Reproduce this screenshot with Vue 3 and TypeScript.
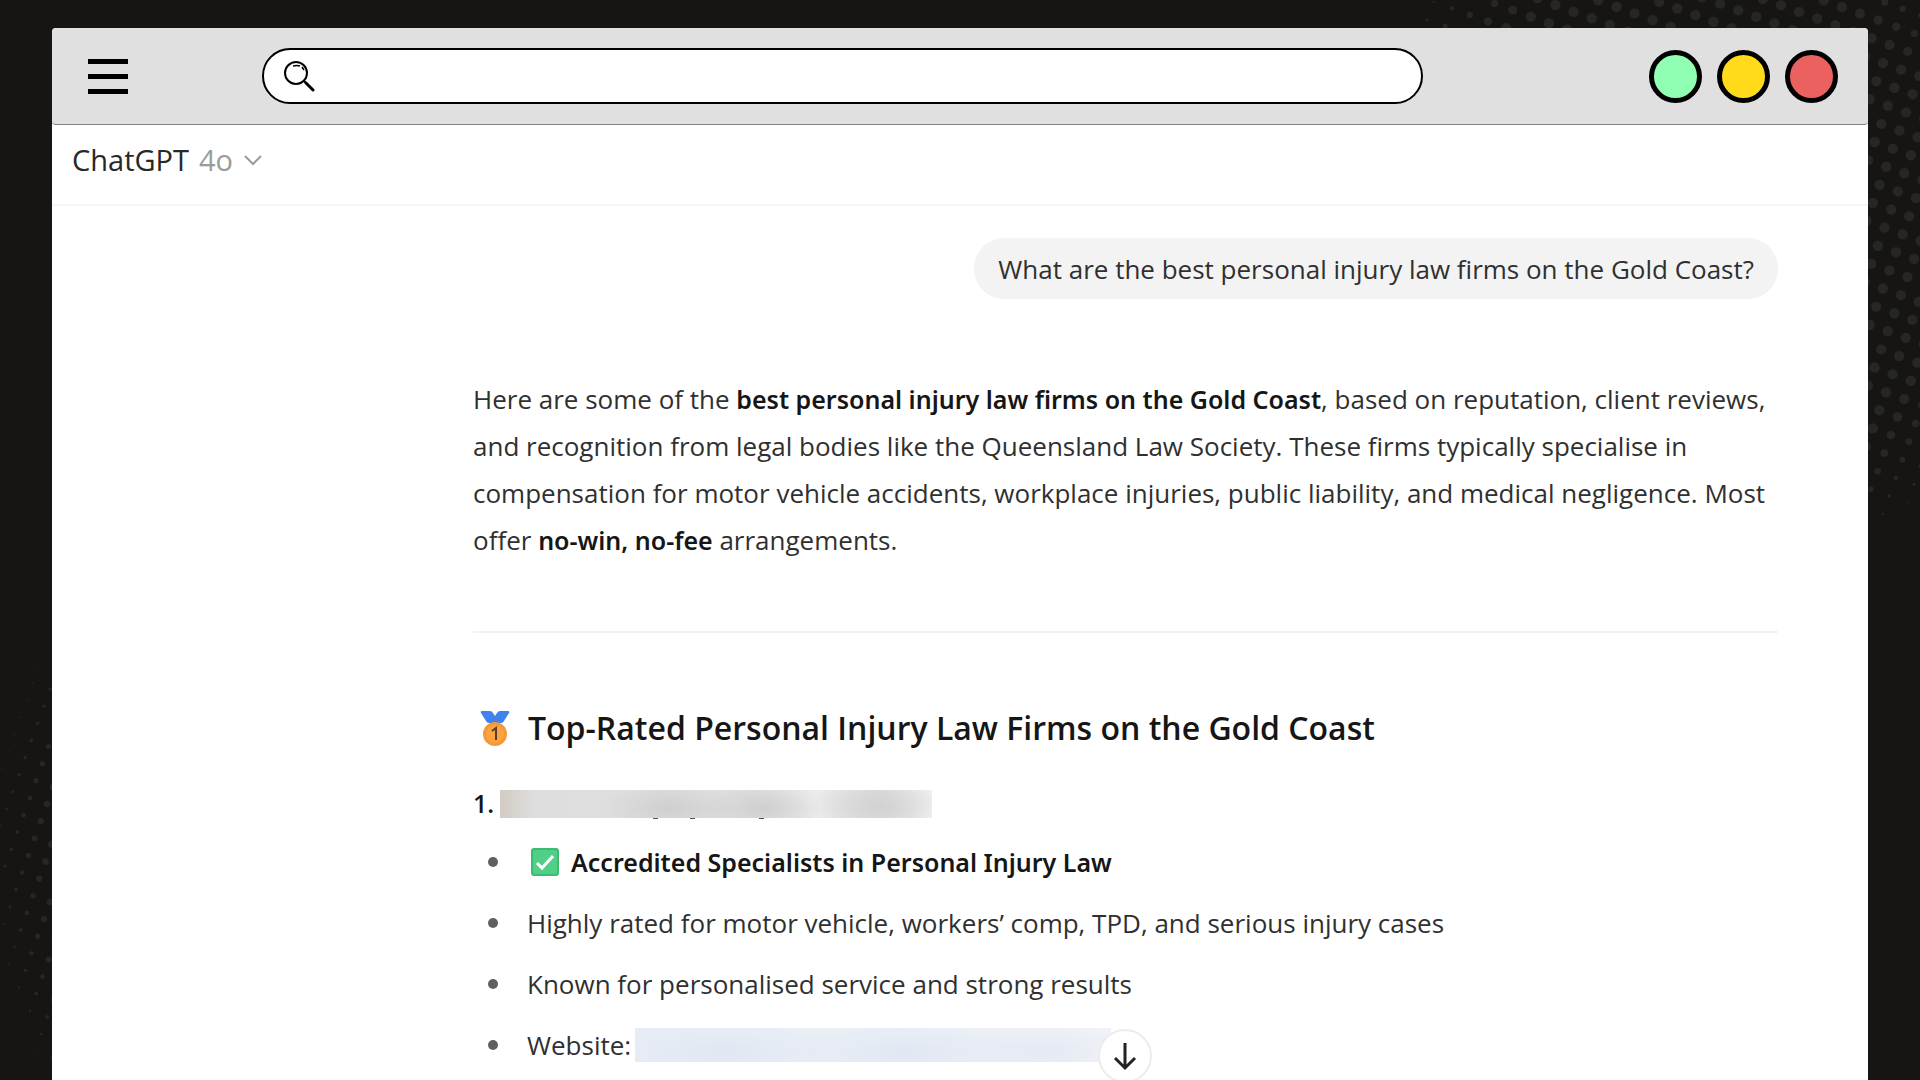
<script setup lang="ts">
interface Dot { x: number; y: number; r: number }
interface Halftone {
  ox: number; oy: number
  ax: number; ay: number
  cx: number; cy: number
  radius: number; max: number; slope: number
  w: number; h: number
}

// Rotated square lattice whose dots shrink towards the rim of a large disc
function halftone(o: Halftone): Dot[] {
  const dots: Dot[] = []
  for (let i = -70; i <= 70; i++) {
    for (let j = -70; j <= 70; j++) {
      const x = o.ox + i * o.ax - j * o.ay
      const y = o.oy + i * o.ay + j * o.ax
      if (x < -6 || y < -6 || x > o.w + 6 || y > o.h + 6) continue
      const r = Math.min(o.max, (o.radius - Math.hypot(x - o.cx, y - o.cy)) / o.slope)
      if (r > 0.5) dots.push({ x, y, r })
    }
  }
  return dots
}

const cornerDots = halftone({ ox: 463, oy: 63, ax: 18.1, ay: 6.6, cx: 270, cy: 230, radius: 365, max: 5.2, slope: 18, w: 500, h: 600 })
const sideDots = halftone({ ox: 26.7, oy: 100, ax: 17.1, ay: 6.2, cx: 400, cy: 262, radius: 424, max: 4, slope: 20, w: 60, h: 480 })

const lights = [
  { name: 'Minimise', color: '#90ffb3' },
  { name: 'Maximise', color: '#ffdb1b' },
  { name: 'Close', color: '#ea6160' },
]
</script>

<template>
  <div class="desktop">
    <svg class="dots corner" width="500" height="600" aria-hidden="true">
      <circle v-for="(d, i) in cornerDots" :key="i" :cx="d.x" :cy="d.y" :r="d.r" />
    </svg>
    <svg class="dots side" width="60" height="480" aria-hidden="true">
      <circle v-for="(d, i) in sideDots" :key="i" :cx="d.x" :cy="d.y" :r="d.r" />
    </svg>

    <div class="window">
      <header class="chrome">
        <button class="menu" type="button" aria-label="Menu"><span></span><span></span><span></span></button>
        <label class="search">
          <svg width="32" height="32" viewBox="0 0 32 32" fill="none" stroke="#000" aria-hidden="true">
            <circle cx="12" cy="13" r="11" stroke-width="2" />
            <path d="M9 6q4-1 7 0M18 7l2 3" stroke-width="1.5" />
            <path d="M20 21l3 3" stroke-width="2" />
            <path d="M22 23l7 7" stroke-width="3" stroke-linecap="round" />
          </svg>
          <input type="text" aria-label="Address" />
        </label>
        <div class="lights">
          <button v-for="l in lights" :key="l.name" type="button" :aria-label="l.name" :style="{ background: l.color }"></button>
        </div>
      </header>

      <div class="topbar">
        <button class="model" type="button">
          ChatGPT <span>4o</span>
          <svg width="20" height="20" viewBox="0 0 20 20" fill="none" stroke="#9b9b9b" stroke-width="2" aria-hidden="true">
            <path d="M2 6l8 8 8-8" />
          </svg>
        </button>
      </div>

      <main class="chat">
        <p class="bubble">What are the best personal injury law firms on the Gold Coast?</p>

        <p class="answer">
          Here are some of the <strong>best personal injury law firms on the Gold Coast</strong>, based on reputation, client reviews,<br />
          and recognition from legal bodies like the Queensland Law Society. These firms typically specialise in<br />
          compensation for motor vehicle accidents, workplace injuries, public liability, and medical negligence. Most<br />
          offer <strong>no-win, no-fee</strong> arrangements.
        </p>

        <hr />

        <h2>
          <svg width="30" height="38" viewBox="0 -2 30 38" aria-hidden="true">
            <path d="M2 0h8q2 0 3 2l2 3 2-3q1-2 3-2h8q2 0 1 2l-5 8q-1 2-3 2H9q-2 0-3-2L1 2Q0 0 2 0z" fill="#3f82ee" />
            <circle cx="15" cy="23" r="12" fill="#f39a37" />
            <circle cx="15" cy="23" r="9" fill="#fba441" />
            <path d="M12 20l4-3v12" fill="none" stroke="#5b3d2a" stroke-width="2" />
          </svg>
          Top-Rated Personal Injury Law Firms on the Gold Coast
        </h2>

        <h3>1. <span class="redacted name"></span></h3>

        <ul>
          <li>
            <svg class="tick" width="28" height="28" viewBox="0 0 28 28" aria-hidden="true">
              <rect width="28" height="28" rx="3" fill="#3dbb72" />
              <rect x="2" y="2" width="24" height="24" rx="2" fill="#4fd086" />
              <path d="M6 15l5 5L22 8" fill="none" stroke="#fff" stroke-width="3" />
            </svg>
            <strong>Accredited Specialists in Personal Injury Law</strong>
          </li>
          <li>Highly rated for motor vehicle, workers’ comp, TPD, and serious injury cases</li>
          <li>Known for personalised service and strong results</li>
          <li>Website: <span class="redacted link"></span></li>
        </ul>

        <button class="down" type="button" aria-label="Scroll to bottom">
          <svg width="28" height="30" viewBox="0 0 28 30" fill="none" stroke="#222" stroke-width="3" aria-hidden="true">
            <path d="M14 2v24M4 17l10 10 10-10" />
          </svg>
        </button>
      </main>
    </div>
  </div>
</template>

<style>
body { background: #161513; }
</style>

<style scoped>
* { box-sizing: border-box; }
.desktop {
  position: relative;
  display: flex;
  min-height: 100vh;
  padding: 28px 52px 0;
  overflow: hidden;
  background: #161513;
  font-family: "Open Sans", "Noto Sans", sans-serif;
  color: #303030;
}
button { padding: 0; border: 0; background: none; font: inherit; color: inherit; }
.dots { position: absolute; fill: #262624; }
.corner { top: 0; right: 0; }
.side { left: 0; top: 600px; }
.window {
  position: relative;
  display: flex;
  flex-direction: column;
  flex: 1;
  min-width: 0;
  border-radius: 4px 4px 0 0;
  background: #fff;
}
.chrome {
  display: flex;
  align-items: center;
  height: 97px;
  padding: 0 30px 0 36px;
  border-bottom: 1px solid #808080;
  border-radius: 4px;
  background: #e0e0e0;
}
.menu { display: flex; flex-direction: column; gap: 10px; width: 40px; margin-right: 134px; }
.menu span { height: 5px; background: #000; }
.search {
  display: flex;
  align-items: center;
  flex: 1;
  height: 56px;
  padding: 0 20px;
  border: 2px solid #000;
  border-radius: 28px;
  background: #fff;
}
.search input { flex: 1; height: 40px; margin-left: 12px; border: 0; outline: 0; background: none; font-size: 24px; }
.lights { display: flex; gap: 15px; margin-left: 226px; }
.lights button { width: 53px; height: 53px; border: 5px solid #000; border-radius: 50%; }
.topbar { display: flex; align-items: center; height: 81px; padding: 0 20px 10px; border-bottom: 2px solid #f5f5f5; }
.model { display: flex; align-items: center; gap: 10px; font-size: 29px; line-height: 40px; color: #282828; }
.model span { color: #9b9b9b; }
.chat { position: relative; display: flex; flex-direction: column; width: 1305px; max-width: 100%; margin: 0 90px 0 auto; padding: 32px 0 8px; font-size: 26px; line-height: 48px; white-space: nowrap; }
p, h2, h3, ul { margin: 0; padding: 0; }
strong { font-family: "Noto Sans", "Open Sans", sans-serif; font-size: 25px; font-weight: 600; color: #161616; }
.bubble { align-self: flex-end; height: 61px; padding: 7px 24px; border-radius: 30px; background: #f3f3f3; }
.answer { margin-top: 77px; line-height: 47px; }
hr { width: 100%; height: 2px; margin: 67px 0 71px; border: 0; background: #f2f2f2; }
h2 { display: flex; align-items: center; gap: 18px; padding-left: 7px; font-size: 32px; line-height: 48px; font-weight: 600; color: #161616; }
h3 { display: flex; align-items: center; gap: 6px; margin: 27px 0 11px; font-size: 25px; line-height: 48px; font-weight: 600; color: #161616; }
.redacted { display: inline-block; }
.name {
  width: 432px;
  height: 30px;
  margin-top: 4px;
  background:
    linear-gradient(#555, #555) 153px 28px / 5px 1px no-repeat,
    linear-gradient(#555, #555) 190px 28px / 5px 1px no-repeat,
    linear-gradient(#555, #555) 259px 28px / 5px 1px no-repeat,
    linear-gradient(#fff, #fff) 0 28px / 100% 2px no-repeat,
    radial-gradient(ellipse 70px 26px at 170px 18px, #cfcfcf, transparent),
    radial-gradient(ellipse 60px 26px at 262px 18px, #cfcfcf, transparent),
    radial-gradient(ellipse 70px 30px at 380px 16px, #d2d2d2, transparent),
    linear-gradient(90deg, #d3cbc3, #dedede 8%, #e0e0e0 60%, #ececec 74%, #dedede 88%, #f4f4f4);
}
ul { display: flex; flex-direction: column; gap: 13px; list-style: none; }
li { display: flex; align-items: center; gap: 4px; padding-left: 54px; }
li::before { content: ""; flex: none; width: 10px; height: 10px; margin: 0 25px 0 -39px; border-radius: 50%; background: #606060; }
.tick { margin: 0 8px 0 4px; }
.link {
  width: 476px;
  height: 34px;
  background:
    radial-gradient(ellipse 120px 30px at 90px 24px, #e1e7f2, transparent),
    radial-gradient(ellipse 120px 30px at 270px 24px, #e1e7f2, transparent),
    radial-gradient(ellipse 90px 30px at 410px 24px, #e4e9f3, transparent),
    linear-gradient(90deg, #e8edf5, #ecf0f6 70%, #f1f3f8);
}
.down {
  position: absolute;
  bottom: -6px;
  left: 50%;
  display: flex;
  align-items: center;
  justify-content: center;
  width: 54px;
  height: 54px;
  margin-left: -28px;
  border: 2px solid #ececec;
  border-radius: 50%;
  background: #fff;
}
</style>
